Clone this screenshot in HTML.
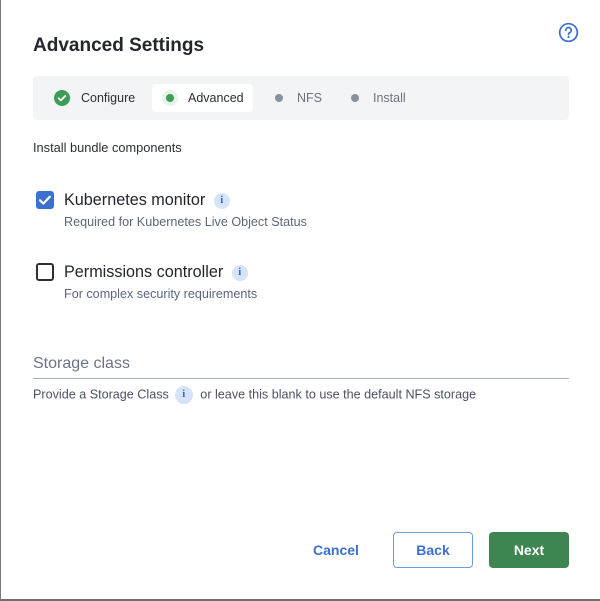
<!DOCTYPE html>
<html><head><style>
*{box-sizing:border-box;margin:0;padding:0}
body{width:600px;height:601px;background:#fff;font-family:"Liberation Sans",Arial,sans-serif;position:relative;overflow:hidden}
.frame{position:absolute;left:0;top:0;width:600px;height:601px;border-left:1.5px solid #7a7a7a;border-bottom:2px solid #6e6e6e}
.abs{position:absolute}
h1{position:absolute;left:33px;top:35px;font-size:19px;font-weight:bold;color:#23262c}
.steps{position:absolute;left:33px;top:76px;width:536px;height:44px;background:#f3f4f6;border-radius:4px}
.step{position:absolute;top:0;height:44px;line-height:44px;font-size:12.5px;color:#2b2f36}
.dot{position:absolute;width:8px;height:8px;border-radius:50%;top:18px}
.info{display:inline-block;width:16px;height:16px;border-radius:50%;background:#d6e4f7;color:#2f5fb3;font-size:10px;font-weight:bold;text-align:center;line-height:16px;font-family:"Liberation Serif",serif;vertical-align:middle}
.lbl{font-size:16.2px;color:#23262c}
.sub{font-size:12.6px;color:#5b6679}
.btn{position:absolute;top:532px;height:36px;border-radius:4px;font-size:14px;font-weight:bold;text-align:center;line-height:36px}
</style></head><body>
<div class="frame"></div>
<svg class="abs" style="left:558px;top:22px" width="21" height="21" viewBox="0 0 21 21"><circle cx="10.5" cy="10.5" r="8.8" fill="none" stroke="#3b6fd0" stroke-width="1.7"/><path d="M7.8 8.3a2.7 2.7 0 1 1 3.8 2.4c-.8.4-1.1.9-1.1 1.8" fill="none" stroke="#3b6fd0" stroke-width="1.7" stroke-linecap="round"/><circle cx="10.5" cy="15" r="1.1" fill="#3b6fd0"/></svg>
<h1>Advanced Settings</h1>
<div class="steps">
 <svg class="abs" style="left:21px;top:14px" width="16" height="16" viewBox="0 0 16 16"><circle cx="8" cy="8" r="8" fill="#3e9c57"/><path d="M4.6 8.2l2.3 2.2 4.4-4.5" fill="none" stroke="#fff" stroke-width="1.8" stroke-linecap="round" stroke-linejoin="round"/></svg>
 <div class="step" style="left:48px">Configure</div>
 <div class="abs" style="left:119px;top:8px;width:101px;height:28px;background:#fff;border-radius:4px"></div>
 <div class="abs" style="left:129px;top:14px;width:16px;height:16px;border-radius:50%;background:#e6f4ea"></div>
 <div class="dot" style="left:133px;background:#3e9c57"></div>
 <div class="step" style="left:155px">Advanced</div>
 <div class="dot" style="left:242px;background:#8a909c"></div>
 <div class="step" style="left:264px;color:#6b7280">NFS</div>
 <div class="dot" style="left:318px;background:#8a909c"></div>
 <div class="step" style="left:340px;color:#6b7280">Install</div>
</div>
<div class="abs" style="left:33px;top:140px;font-size:12.8px;color:#2b2f36">Install bundle components</div>
<div class="abs" style="left:36px;top:191px;width:18px;height:18px;border-radius:3px;background:#3b6fd0"></div>
<svg class="abs" style="left:36px;top:191px" width="18" height="18" viewBox="0 0 18 18"><path d="M4 9.3l3.3 3.2 6.5-6.7" fill="none" stroke="#fff" stroke-width="2.2" stroke-linecap="round" stroke-linejoin="round"/></svg>
<div class="abs lbl" style="left:64px;top:191px">Kubernetes monitor <span class="info" style="margin-left:4px">i</span></div>
<div class="abs sub" style="left:64px;top:215px">Required for Kubernetes Live Object Status</div>
<div class="abs" style="left:36px;top:263px;width:18px;height:18px;border-radius:3px;border:2px solid #2b2f36"></div>
<div class="abs lbl" style="left:64px;top:263px">Permissions controller <span class="info" style="margin-left:4px">i</span></div>
<div class="abs sub" style="left:64px;top:287px">For complex security requirements</div>
<div class="abs" style="left:33px;top:355px;font-size:16px;color:#6b7385">Storage class</div>
<div class="abs" style="left:33px;top:378px;width:536px;height:1px;background:#a9afba"></div>
<div class="abs sub" style="left:33px;top:386px;color:#4a5263">Provide a Storage Class<span class="info" style="margin:0 4px 0 6px;width:18px;height:18px;line-height:18px">i</span> or leave this blank to use the default NFS storage</div>
<div class="btn" style="left:305px;width:62px;color:#3b6fd0;border:none">Cancel</div>
<div class="btn" style="left:393px;width:80px;color:#3b6fd0;border:1px solid #6b9be0;background:#fff;line-height:34px">Back</div>
<div class="btn" style="left:489px;width:80px;color:#fff;background:#3e8552">Next</div>
</body></html>
